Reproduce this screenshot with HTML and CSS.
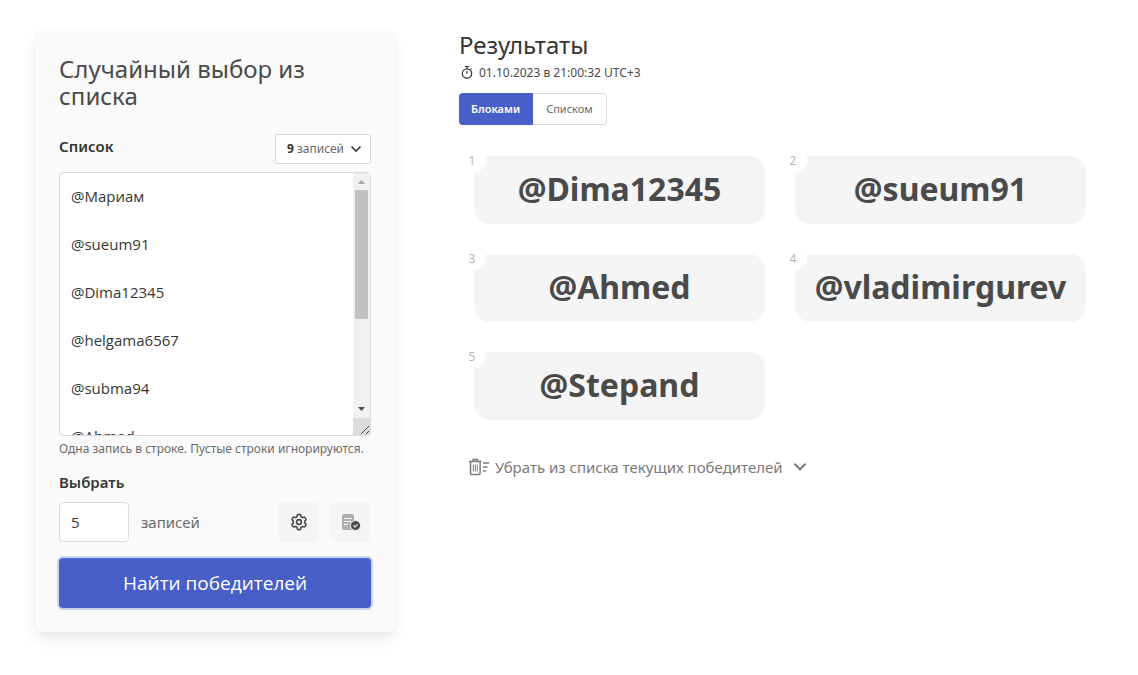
FILE: index.html
```html
<!DOCTYPE html>
<html lang="ru">
<head>
<meta charset="utf-8">
<meta name="viewport" content="width=device-width, initial-scale=1">
<title>Случайный выбор из списка</title>
<link rel="stylesheet" href="styles.css">
</head>
<body>
<main class="page">
  <form class="card">
    <h1 class="title card-title">Случайный выбор из списка</h1>
    <div class="list-head">
      <label class="label" for="entries">Список</label>
      <button class="count" type="button"><span><b>9</b> записей</span>
        <svg width="12" height="8" viewBox="0 0 12 8" fill="none" stroke="currentColor" stroke-width="1.700"><path d="M1.500 1.500 6 6l4.500-4.500"/></svg>
      </button>
    </div>
    <div class="editor">
      <textarea class="entries" id="entries">@Мариам

@sueum91

@Dima12345

@helgama6567

@subma94

@Ahmed

@vladimirgurev

@Stepand

@oleg_k</textarea>
      <div class="scrollbar" aria-hidden="true">
        <svg width="17" height="17" viewBox="0 0 17 17"><path d="m5 11 3.500-4 3.500 4z" fill="#a3a3a3"/></svg>
        <div class="track"><div class="thumb"></div></div>
        <svg width="17" height="17" viewBox="0 0 17 17"><path d="m5 6 3.500 4L12 6z" fill="#505050"/></svg>
        <svg class="grip" width="17" height="17" viewBox="0 0 17 17"><path d="m8 16 8-8M13 16l3-3" stroke="#505050"/></svg>
      </div>
    </div>
    <p class="help">Одна запись в строке. Пустые строки игнорируются.</p>
    <label class="label" for="amount">Выбрать</label>
    <div class="pick">
      <input class="amount" id="amount" type="text" inputmode="numeric" value="5">
      <span class="unit">записей</span>
      <button class="tool" type="button" aria-label="Настройки">
        <svg width="18" height="18" viewBox="0 0 18 18" fill="none" stroke="#4a4a4a" stroke-width="1.600" stroke-linejoin="round"><path d="M7.500 1.800Q9 .9 10.500 1.800L11 3.700l1.600.9 1.900-.5Q16 5 16 6.700L14.700 8.100v1.800L16 11.300Q16 13 14.500 13.900l-1.900-.5-1.600.9-.5 1.900Q9 17.100 7.500 16.200L7 14.300l-1.600-.9-1.900.5Q2 13 2 11.300L3.300 9.900V8.100L2 6.700Q2 5 3.500 4.100l1.900.5L7 3.700z"/><circle cx="9" cy="9" r="2.400"/></svg>
      </button>
      <button class="tool" type="button" aria-label="Список победителей">
        <svg width="20" height="18" viewBox="0 0 20 18"><rect x="1" y="1" width="12" height="16" rx="2" fill="#b0b0b0"/><path d="M3 5.500h8M3 8.500h7M3 11.500h4" stroke="#f5f5f5" stroke-width="1.200"/><circle cx="14.500" cy="12.500" r="5" fill="#4a4a4a" stroke="#f5f5f5"/><path d="m12.500 12.500 1.500 1.500 2.600-2.600" fill="none" stroke="#f5f5f5" stroke-width="1.200"/></svg>
      </button>
    </div>
    <button class="submit" type="button">Найти победителей</button>
  </form>

  <section class="results">
    <h2 class="title">Результаты</h2>
    <p class="time">
      <svg width="16" height="16" viewBox="0 0 16 16" fill="none" stroke="#363636" stroke-width="1.200"><circle cx="8" cy="8.500" r="4.700"/><path d="M8 3.800V1.500M5.800 1.500h4.400M8 8.800V6M11.400 4.700l1.100-1.100"/></svg>
      <span>01.10.2023 в 21:00:32 UTC+3</span>
    </p>
    <div class="tabs">
      <button class="tab tab-active" type="button">Блоками</button>
      <button class="tab" type="button">Списком</button>
    </div>
    <ol class="winners">
      <li class="winner"><span class="place">1</span>@Dima12345</li>
      <li class="winner"><span class="place">2</span>@sueum91</li>
      <li class="winner"><span class="place">3</span>@Ahmed</li>
      <li class="winner"><span class="place">4</span>@vladimirgurev</li>
      <li class="winner"><span class="place">5</span>@Stepand</li>
    </ol>
    <button class="remove" type="button">
      <svg width="20" height="18" viewBox="0 0 20 18" fill="none" stroke="currentColor" stroke-width="1.500"><path d="M0 3.500h12.500M4 3.300V1.500h4.500v1.800M1.500 3.500v11.200q0 1.800 1.800 1.800h6q1.800 0 1.800-1.800V3.500M14 5h6M14 9h4.500M14 13h3"/><path d="M4.300 6.500v7M6.300 6.500v7M8.300 6.500v7" stroke-width="1"/></svg>
      <span>Убрать из списка текущих победителей</span>
      <svg class="chevron" width="14" height="10" viewBox="0 0 14 10" fill="none" stroke="currentColor" stroke-width="2"><path d="m1.500 1.800 5.500 5.500 5.500-5.500"/></svg>
    </button>
  </section>
</main>
</body>
</html>
```
FILE: styles.css
```css
* {
  box-sizing: border-box;
}

body {
  margin: 0;
  background: #fff;
  color: #4a4a4a;
  font: 16px/24px "Noto Sans", sans-serif;
}

h1, h2, p, ol {
  margin: 0;
  padding: 0;
}

button, input, textarea {
  margin: 0;
  color: inherit;
  font: inherit;
}

button {
  cursor: pointer;
}

svg {
  flex: none;
}

.page {
  display: grid;
  grid-template-columns: minmax(0, 360fr) minmax(0, 642fr);
  align-items: start;
  gap: 64px;
  padding: 31px 37px 31px 35px;
}

.card {
  padding: 24px;
  border-radius: 6px;
  background: #fafafa;
  box-shadow: 0 8px 16px -2px rgba(10, 10, 10, 0.1), 0 0 0 1px rgba(10, 10, 10, 0.02);
}

.title {
  color: #363636;
  font-size: 24px;
  font-weight: 400;
  line-height: 27px;
}

.card-title {
  margin-bottom: 25px;
  color: #4a4a4a;
}

.list-head {
  display: flex;
  justify-content: space-between;
  align-items: flex-start;
  margin-bottom: 8px;
}

.label {
  display: block;
  color: #363636;
  font-size: 15px;
  font-weight: 600;
}

.count {
  display: flex;
  align-items: center;
  gap: 6px;
  height: 30px;
  padding: 0 8px 0 11px;
  border: 1px solid #dbdbdb;
  border-radius: 2px;
  background: #fff;
  color: #363636;
  font-size: 12px;
}

.count span {
  color: #6a6a6a;
}

.count b {
  color: #363636;
}

.editor {
  display: flex;
  height: 264px;
  overflow: hidden;
  border: 1px solid #dbdbdb;
  border-radius: 4px;
  background: #fff;
}

.entries {
  flex: 1;
  min-width: 0;
  padding: 11px;
  border: 0;
  outline: 0;
  background: none;
  color: #363636;
  font-family: "Open Sans", sans-serif;
  font-size: 15px;
  resize: none;
}

.scrollbar {
  display: flex;
  flex-direction: column;
  width: 17px;
  background: #f1f1f1;
}

.track {
  flex: 1;
  padding: 0 2px;
}

.thumb {
  height: 61%;
  background: #c1c1c1;
}

.grip {
  background: #dcdcdc;
}

.help {
  margin: 4px 0 12px;
  color: #6a6a6a;
  font-size: 12px;
  line-height: 18px;
}

.pick {
  display: flex;
  align-items: center;
  gap: 12px;
  margin: 8px 0 16px;
}

.amount {
  width: 70px;
  height: 40px;
  padding: 0 11px;
  border: 1px solid #dbdbdb;
  border-radius: 4px;
  background: #fff;
  color: #363636;
  font-family: "Open Sans", sans-serif;
  font-size: 15px;
}

.unit {
  flex: 1;
  color: #6a6a6a;
  font-size: 15px;
}

.tool {
  display: grid;
  place-items: center;
  width: 40px;
  height: 40px;
  padding: 0;
  border: 0;
  border-radius: 4px;
  background: #f5f5f5;
}

.submit {
  width: 100%;
  height: 50px;
  border: 0;
  border-radius: 4px;
  background: #485fc7;
  box-shadow: 0 0 0 2px rgba(72, 95, 199, 0.25);
  color: #fff;
  font-family: "Open Sans", sans-serif;
  font-size: 19px;
}

.time {
  display: flex;
  align-items: center;
  gap: 4px;
  margin: 6px 0 11px;
  color: #4a4a4a;
  font-size: 12px;
  line-height: 18px;
}

.tabs {
  display: flex;
  margin-bottom: 31px;
}

.tab {
  height: 32px;
  padding: 0 13px;
  border: 1px solid #dbdbdb;
  border-left: 0;
  border-radius: 0 4px 4px 0;
  background: #fff;
  color: #6a6a6a;
  font-size: 11px;
}

.tab-active {
  padding: 0 12px;
  border-color: #485fc7;
  border-radius: 4px 0 0 4px;
  background: #485fc7;
  color: #fff;
  font-weight: 600;
}

.winners {
  display: grid;
  grid-template-columns: repeat(2, minmax(0, 1fr));
  gap: 30px;
  margin: 0 15px 35px;
  list-style: none;
}

.winner {
  position: relative;
  padding: 15px 16px 17px;
  border-radius: 16px;
  background: #f5f5f5;
  font-size: 32px;
  font-weight: 700;
  line-height: 36px;
  text-align: center;
}

/* Place number sits over the block's corner */
.place {
  position: absolute;
  top: -8px;
  left: -12px;
  width: 24px;
  height: 24px;
  padding-right: 4px;
  border-radius: 12px;
  background: #fff;
  color: #b5b5b5;
  font-size: 12px;
  font-weight: 400;
  line-height: 26px;
}

.remove {
  display: flex;
  align-items: center;
  gap: 6px;
  padding: 0 10px;
  border: 0;
  background: none;
  color: #7a7a7a;
  font-size: 15px;
}

.chevron {
  margin-left: 4px;
}
```
